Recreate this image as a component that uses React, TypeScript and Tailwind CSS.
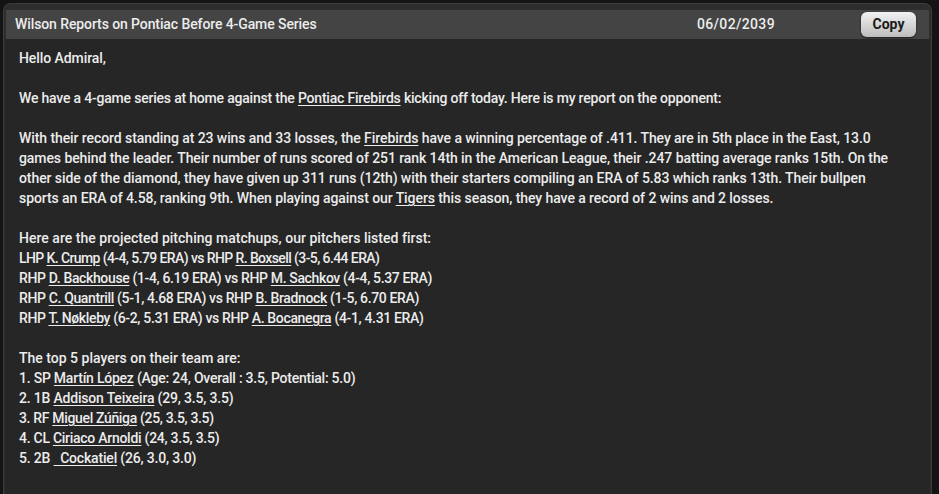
import React from "react";

const U = ({ children }: { children: React.ReactNode }) => (
  <span className="underline underline-offset-2 decoration-1">{children}</span>
);

export default function App() {
  return (
    <div
      className="w-[939px] h-[494px] bg-[#141414] flex overflow-hidden"
      style={{ fontFamily: "Roboto, 'Liberation Sans', sans-serif" }}
    >
      <div className="ml-[3px] mt-[3px] w-[929px] h-[491px] rounded-t-[8px] bg-[#2d2d2d] border border-[#3c3c3c] border-b-0 flex flex-col pt-[6px] px-[1px]">
        <div className="h-[29px] mx-[1px] bg-[#444444] flex items-center pl-[9px] pr-[13px] text-[14px] text-[#ececec] font-medium">
          <span className="tracking-[-0.1px]">Wilson Reports on Pontiac Before 4-Game Series</span>
          <span className="ml-auto mr-[86px] tracking-[0.35px]">06/02/2039</span>
          <button className="w-[55px] h-[25px] rounded-[6px] bg-gradient-to-b from-[#f2f2f2] to-[#bdbdbd] text-[#1a1a1a] text-[14px] font-bold shadow-[0_1px_2px_rgba(0,0,0,0.6)]">
            Copy
          </button>
        </div>
        <div className="flex-1 bg-[#262626] pl-[14px] pt-[9px] text-[14px] leading-[20px] text-[#ececec] font-medium whitespace-nowrap tracking-[-0.08px]">
          <div>Hello Admiral,</div>
          <div className="h-[20px]" />
          <div className="tracking-[-0.2px]">
            We have a 4-game series at home against the <U>Pontiac Firebirds</U> kicking off today. Here is my report on the opponent:
          </div>
          <div className="h-[20px]" />
          <div>
            With their record standing at 23 wins and 33 losses, the <U>Firebirds</U> have a winning percentage of .411. They are in 5th place in the East, 13.0
          </div>
          <div>
            games behind the leader. Their number of runs scored of 251 rank 14th in the American League, their .247 batting average ranks 15th. On the
          </div>
          <div>
            other side of the diamond, they have given up 311 runs (12th) with their starters compiling an ERA of 5.83 which ranks 13th. Their bullpen
          </div>
          <div>
            sports an ERA of 4.58, ranking 9th. When playing against our <U>Tigers</U> this season, they have a record of 2 wins and 2 losses.
          </div>
          <div className="h-[20px]" />
          <div className="tracking-[0.02px]">Here are the projected pitching matchups, our pitchers listed first:</div>
          <div className="tracking-[-0.6px]">
            LHP <U>K. Crump</U> (4-4, 5.79 ERA) vs RHP <U>R. Boxsell</U> (3-5, 6.44 ERA)
          </div>
          <div className="tracking-[-0.36px]">
            RHP <U>D. Backhouse</U> (1-4, 6.19 ERA) vs RHP <U>M. Sachkov</U> (4-4, 5.37 ERA)
          </div>
          <div className="tracking-[-0.36px]">
            RHP <U>C. Quantrill</U> (5-1, 4.68 ERA) vs RHP <U>B. Bradnock</U> (1-5, 6.70 ERA)
          </div>
          <div className="tracking-[-0.35px]">
            RHP <U>T. Nøkleby</U> (6-2, 5.31 ERA) vs RHP <U>A. Bocanegra</U> (4-1, 4.31 ERA)
          </div>
          <div className="h-[20px]" />
          <div className="tracking-[0px]">The top 5 players on their team are:</div>
          <div className="tracking-[-0.23px]">
            1. SP <U>Martín López</U> (Age: 24, Overall : 3.5, Potential: 5.0)
          </div>
          <div className="tracking-[-0.19px]">
            2. 1B <U>Addison Teixeira</U> (29, 3.5, 3.5)
          </div>
          <div className="tracking-[-0.34px]">
            3. RF <U>Miguel Zúñiga</U> (25, 3.5, 3.5)
          </div>
          <div className="tracking-[-0.27px]">
            4. CL <U>Ciriaco Arnoldi</U> (24, 3.5, 3.5)
          </div>
          <div className="tracking-[-0.18px]">
            5. 2B <U>{"\u00a0\u00a0Cockatiel"}</U> (26, 3.0, 3.0)
          </div>
        </div>
      </div>
    </div>
  );
}
